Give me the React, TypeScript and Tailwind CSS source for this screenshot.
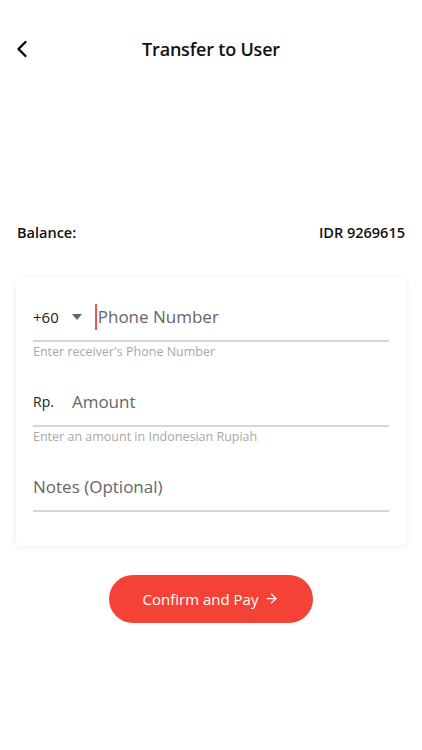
import { ChevronLeft, ArrowRight } from 'lucide-react';

const font = { fontFamily: '"Open Sans", "Noto Sans", sans-serif' };

function Field({
  prefix,
  placeholder,
  helper,
  caret,
}: {
  prefix?: React.ReactNode;
  placeholder: string;
  helper?: string;
  caret?: boolean;
}) {
  return (
    <div className="flex flex-col">
      <div className="flex items-center h-[40px] pb-[8px] border-b-2 border-[#d6d6d6]">
        {prefix}
        {caret && <span className="w-[2px] h-[26px] bg-[#ef5350] mr-[1px]" />}
        <span className="text-[17px] text-[#666] leading-none">{placeholder}</span>
      </div>
      {helper ? (
        <p className="text-[12.5px] text-[#a8a8a8] mt-[1px] h-[20px]">{helper}</p>
      ) : null}
    </div>
  );
}

export default function App() {
  return (
    <div className="w-[422px] h-[750px] bg-white text-[#111]" style={font}>
      <header className="relative flex items-center justify-center h-[56px] mt-[21px]">
        <button className="absolute left-[8px] top-[14px] text-black">
          <ChevronLeft size={28} strokeWidth={2} />
        </button>
        <h1 className="text-[18px] font-semibold tracking-[-0.2px]">Transfer to User</h1>
      </header>

      <div className="flex justify-between items-center px-[17px] mt-[145px] text-[14.5px] font-semibold">
        <span>Balance:</span>
        <span>IDR 9269615</span>
      </div>

      <div className="mx-[16px] mt-[34px] rounded-[6px] bg-white shadow-[0_1px_6px_rgba(0,0,0,0.08)] px-[17px] pt-[24px] pb-[34px] flex flex-col gap-[24px]">
        <Field
          caret
          prefix={
            <div className="flex items-center mr-[13px]">
              <span className="text-[15px] text-[#222]">+60</span>
              <span className="ml-[13px] w-0 h-0 border-l-[5px] border-r-[5px] border-t-[6px] border-l-transparent border-r-transparent border-t-[#666]" />
            </div>
          }
          placeholder="Phone Number"
          helper="Enter receiver's Phone Number"
        />
        <Field
          prefix={<span className="text-[14px] text-[#222] mr-[18px]">Rp.</span>}
          placeholder="Amount"
          helper="Enter an amount in Indonesian Rupiah"
        />
        <Field placeholder="Notes (Optional)" />
      </div>

      <div className="flex justify-center mt-[29px]">
        <button className="flex items-center gap-[6px] h-[48px] w-[204px] justify-center rounded-full bg-[#f44336] text-white text-[15px]">
          Confirm and Pay
          <ArrowRight size={15} strokeWidth={2} />
        </button>
      </div>
    </div>
  );
}
